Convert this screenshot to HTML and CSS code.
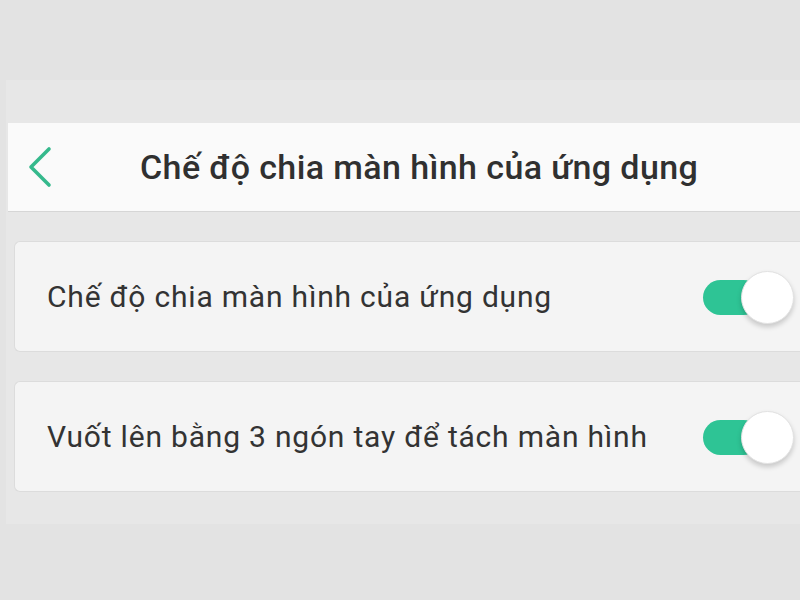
FILE: index.html
```html
<!DOCTYPE html>
<html lang="vi">
<head>
<meta charset="utf-8">
<link rel="stylesheet" href="styles.css">
</head>
<body>
<div class="screen">
  <div class="panel">
    <header class="header">
      <svg class="back" viewBox="0 0 26 42" width="26" height="42">
        <path d="M22 3 L4 21 L22 39" fill="none" stroke="#35b98c" stroke-width="3.6" stroke-linecap="round" stroke-linejoin="round"/>
      </svg>
      <h1 class="title">Chế độ chia màn hình của ứng dụng</h1>
    </header>
    <div class="list">
      <div class="card">
        <span class="label">Chế độ chia màn hình của ứng dụng</span>
        <span class="toggle"><span class="track"></span><span class="knob"></span></span>
      </div>
      <div class="card">
        <span class="label">Vuốt lên bằng 3 ngón tay để tách màn hình</span>
        <span class="toggle"><span class="track"></span><span class="knob"></span></span>
      </div>
    </div>
  </div>
</div>
</body>
</html>
```
FILE: styles.css
```css
html, body {
  margin: 0;
  padding: 0;
  background: #e3e3e3;
  font-family: Roboto, "Noto Sans", "Liberation Sans", sans-serif;
  overflow: hidden;
}
.screen {
  width: 800px;
  height: 600px;
  padding-top: 80px;
  box-sizing: border-box;
}
.panel {
  margin-left: 6px;
  height: 444px;
  background: #e7e7e7;
  padding-top: 43px;
  box-sizing: border-box;
}
.header {
  margin-left: 2px;
  height: 88px;
  background: #fafafa;
  border-bottom: 1px solid #d6d6d6;
  display: flex;
  align-items: center;
}
.back {
  margin-left: 19px;
  flex: none;
}
.title {
  margin: 0 0 0 87px;
  font-size: 34px;
  font-weight: 500;
  color: #303030;
  letter-spacing: 0.4px;
  white-space: nowrap;
}
.list {
  display: flex;
  flex-direction: column;
  gap: 29px;
  padding: 29px 0 0 8px;
}
.card {
  height: 111px;
  background: #f4f4f4;
  border: 1px solid #dcdcdc;
  border-right: none;
  border-radius: 6px 0 0 6px;
  display: flex;
  align-items: center;
  box-sizing: border-box;
  padding-left: 32px;
}
.label {
  flex: 1;
  font-size: 30px;
  color: #333;
  letter-spacing: 0.8px;
  white-space: nowrap;
}
.toggle {
  position: relative;
  width: 94px;
  height: 54px;
  margin-right: 5px;
  flex: none;
}
.track {
  position: absolute;
  left: 2px;
  top: 10px;
  width: 58px;
  height: 35px;
  border-radius: 18px;
  background: #2ec495;
}
.knob {
  position: absolute;
  left: 40px;
  top: 1px;
  width: 53px;
  height: 53px;
  border-radius: 50%;
  background: #fff;
  border: 1px solid #e2e2e2;
  box-sizing: border-box;
  box-shadow: 0 3px 5px rgba(0,0,0,0.18);
}
```
